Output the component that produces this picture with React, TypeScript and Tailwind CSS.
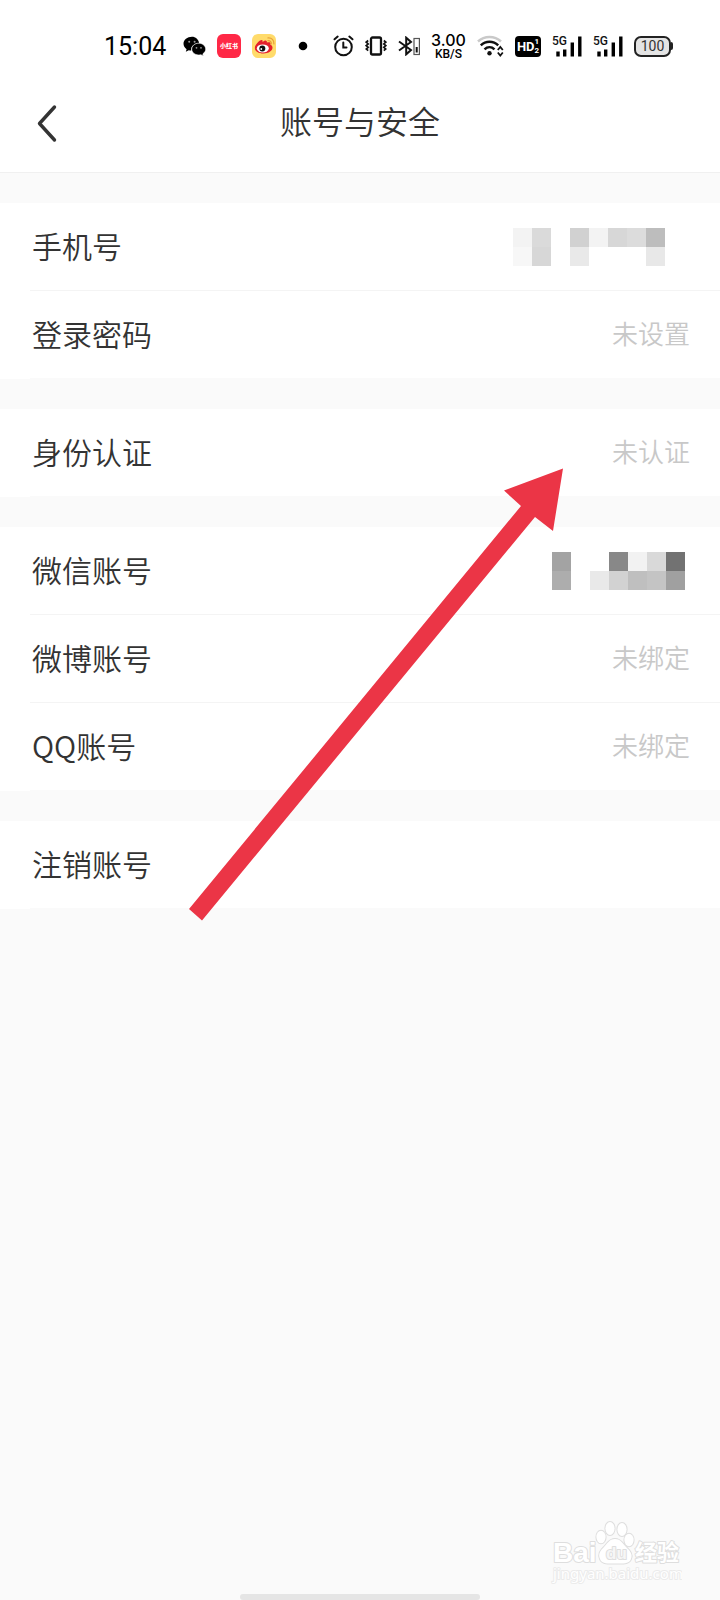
import type { ReactNode } from "react";

function StatusBar() {
  return (
    <div className="flex h-[92px] items-center gap-[11px] pl-[104px] text-black">
      <time className="w-[68px] text-[25px] leading-none font-[Roboto,sans-serif]">15:04</time>
      <svg className="h-[20px] w-[23px] shrink-0" viewBox="0 0 23 20" aria-label="WeChat">
        <path d="M9 0.8c-4.7 0-8.5 3.1-8.5 7 0 2.2 1.2 4.1 3.1 5.4l-.8 2.6 3-1.6c.8.2 1.5.4 2.4.4-.7-4.300 3.300-7.600 8-7.400C15.400 3.500 12.600.8 9 .8Z" fill="#000" />
        <path d="M15.700 7.200c-3.900 0-7 2.700-7 5.900s3.100 5.900 7 5.900c.8 0 1.500-.1 2.200-.3l2.500 1.300-.6-2.100c1.700-1.100 2.900-2.800 2.900-4.800 0-3.200-3.100-5.900-7-5.900Z" fill="#000" stroke="#fff" strokeWidth="0.600" />
        <circle cx="6.200" cy="5.800" r="1" fill="#999" />
        <circle cx="11.600" cy="5.800" r="1" fill="#999" />
        <circle cx="13.500" cy="11.800" r="0.900" fill="#999" />
        <circle cx="18" cy="11.800" r="0.900" fill="#999" />
      </svg>
      <span className="flex size-[24px] shrink-0 items-center justify-center rounded-md bg-[#ff2846] text-[6px] leading-none font-black whitespace-nowrap text-white">
        小红书
      </span>
      <svg className="size-[24px] shrink-0" viewBox="0 0 24 24" aria-label="Weibo">
        <rect width="24" height="24" rx="6" fill="#ffdb6b" />
        <path d="M10.500 8.200C12 6.500 14 6 14.700 7c.3.500.2 1 .1 1.600 2-.7 3.800-.5 3.800 1 0 .6-.2 1-.2 1.200 1.300.5 2.100 1.500 2.100 2.900 0 3-4 5.700-9 5.700-4.800 0-8.700-2.100-8.700-5.500C2.800 11 7.500 5.800 9.800 6c.9.100 1 1 .7 2.200Z" fill="#e4202c" />
        <ellipse cx="10.800" cy="14.400" rx="6" ry="4" fill="#fff" />
        <circle cx="10.300" cy="14.500" r="3" fill="#111" />
        <circle cx="9.300" cy="15" r="0.900" fill="#fff" />
        <path d="M16 6.700c2-.3 3.500 1.200 3.300 3.200M16 3.900c3.600-.4 6.200 2.300 5.900 6" fill="none" stroke="#e9a23b" strokeWidth="1.300" strokeLinecap="round" />
      </svg>
      <svg className="h-[10px] w-[35px] shrink-0" viewBox="0 0 35 10">
        <circle cx="16" cy="5" r="4.300" />
      </svg>
      <svg className="h-[22px] w-[21px] shrink-0" viewBox="0 0 21 22" fill="none" stroke="#111" strokeWidth="2" strokeLinecap="round" aria-label="Alarm">
        <circle cx="10.500" cy="12" r="8.300" />
        <path d="M10.300 7.500v5h3.200M1.500 4.300 4.700 1.600M19.500 4.300l-3.200-2.700" />
      </svg>
      <svg className="h-[20px] w-[22px] shrink-0" viewBox="0 0 22 20" fill="none" stroke="#111" strokeWidth="1.700" aria-label="Vibrate">
        <rect x="6" y="1.500" width="10" height="17" rx="1.500" strokeWidth="2.300" />
        <path d="M3.200 4.500l-2 1.700 2 1.700-2 1.700 2 1.700-2 1.700 2 1.700M18.800 4.500l2 1.700-2 1.700 2 1.700-2 1.700 2 1.700-2 1.700" />
      </svg>
      <svg className="h-[20px] w-[22px] shrink-0" viewBox="0 0 22 20" fill="none" stroke="#111" strokeWidth="2" aria-label="Bluetooth">
        <path d="M1 5.500 13 14 8.200 18.300V1.700L13 6 1 14.500" />
        <rect x="16" y="2.500" width="5.400" height="16" strokeWidth="1.200" stroke="#555" />
        <path d="M18.700 11v5.500" strokeWidth="2" />
      </svg>
      <span className="flex w-[35px] flex-col items-center font-medium">
        <span className="font-[Inter,sans-serif] text-[16px] leading-[16px]">3.00</span>
        <span className="font-[Roboto,sans-serif] text-[12px] leading-[12px]">KB/S</span>
      </span>
      <svg className="h-[22px] w-[27px] shrink-0" viewBox="0 0 27 22" fill="none" strokeWidth="2.500" aria-label="Wi-Fi">
        <path d="M1 6.500c6.500-6 16.500-6 23 0" stroke="#c9c9c9" />
        <path d="M3.800 10.300c5-4.800 12.400-4.800 17.400 0M7.500 14.300c3-2.800 7-2.800 10 0" stroke="#111" />
        <circle cx="12.500" cy="18.300" r="2.200" fill="#111" />
        <path d="m20.800 15 2.500-3 2.500 3M20.800 17.500l2.500 3 2.500-3" stroke="#111" strokeWidth="1.800" />
      </svg>
      <span className="flex h-[21px] w-[26px] shrink-0 items-center justify-center rounded-[4px] bg-black font-[Roboto,sans-serif] font-bold text-white">
        <span className="text-[13px] leading-none">HD</span>
        <span className="flex flex-col text-[8px] leading-[9px]">
          <span>1</span>
          <span>2</span>
        </span>
      </span>
      <Signal />
      <Signal />
      <span className="flex shrink-0 items-center">
        <span className="flex h-[21px] w-[37px] items-center justify-center rounded-[7px] border-2 border-[#222] bg-[#e4e4e4] font-[Roboto,sans-serif] text-[14px] leading-none text-[#333]">
          100
        </span>
        <span className="h-[8px] w-[2px] rounded-r-sm bg-[#222]" />
      </span>
    </div>
  );
}

function Signal() {
  return (
    <svg className="h-[22px] w-[30px] shrink-0" viewBox="0 0 30 22" aria-label="5G signal">
      <text x="0" y="10" fontSize="12" fontFamily="Roboto, sans-serif" fontWeight="500" fill="#111">5G</text>
      <path d="M6 21.500v-5M12.700 21.500v-7M20.300 21.500v-14M27.800 21.500v-20" stroke="#000" strokeWidth="3.400" />
    </svg>
  );
}

function Mosaic({ rows }: { rows: string[][] }) {
  return (
    <span className="flex flex-col" role="img" aria-label="••••">
      {rows.map((row, r) => (
        <span key={r} className="flex">
          {row.map((color, c) => (
            <span key={c} className="size-[19px]" style={{ backgroundColor: color }} />
          ))}
        </span>
      ))}
    </span>
  );
}

function Row({ label, children }: { label: string; children?: ReactNode }) {
  return (
    <li className="group h-[88px] bg-white pl-[30px]">
      <button type="button" className="flex h-full w-full items-center justify-between border-b border-[#f4f4f4] pr-[30px] pb-[3px] pl-[2px] text-left group-last:border-[#fafafa]">
        <span className="text-[30px] leading-[44px] font-[350] text-[#333]">{label}</span>
        <span className="text-[26px] leading-[40px] font-[350] text-[#c8c8c8]">{children}</span>
      </button>
    </li>
  );
}

const W = "transparent";
const phone = [
  ["#f3f3f3", "#dadada", W, "#d1d1d1", "#f3f3f3", "#d7d7d7", "#dcdcdc", "#bdbdbd"],
  ["#f7f7f7", "#d7d7d7", W, "#e9e9e9", W, W, W, "#e8e8e8"],
];
const wechat = [
  ["#a3a3a3", W, W, "#888888", "#f2f2f2", "#d9d9d9", "#727272"],
  ["#adadad", W, "#e9e9e9", "#d2d2d2", "#bfbfbf", "#c4c4c4", "#a0a0a0"],
];

export default function App() {
  return (
    <div className="relative flex min-h-screen flex-col bg-[#fafafa] font-['Noto_Sans_CJK_SC',sans-serif]">
      <div className="bg-white">
        <StatusBar />
        <header className="grid h-[81px] grid-cols-[96px_1fr_96px] border-b border-[#f0f0f0] pb-[20px]">
          <button type="button" aria-label="返回" className="flex items-center pt-[2px] pl-[36px]">
            <svg className="h-[40px] w-[22px]" viewBox="0 0 22 40" fill="none" stroke="#333" strokeWidth="3.400" strokeLinecap="round" strokeLinejoin="round">
              <path d="M18.500 4 3.500 20.500l15 16.500" />
            </svg>
          </button>
          <h1 className="pt-[6px] text-center text-[32px] leading-[44px] font-[350] text-[#333]">账号与安全</h1>
        </header>
      </div>

      <main className="flex flex-col gap-[30px] pt-[30px]">
        <ul>
          <Row label="手机号">
            <span className="block pt-[3px] pr-[25px]">
              <Mosaic rows={phone} />
            </span>
          </Row>
          <Row label="登录密码">未设置</Row>
        </ul>
        <ul>
          <Row label="身份认证">未认证</Row>
        </ul>
        <ul>
          <Row label="微信账号">
            <span className="block pt-[3px] pr-[5px]">
              <Mosaic rows={wechat} />
            </span>
          </Row>
          <Row label="微博账号">未绑定</Row>
          <Row label="QQ账号">未绑定</Row>
        </ul>
        <ul>
          <Row label="注销账号" />
        </ul>
      </main>

      <svg className="pointer-events-none absolute top-[468px] left-[188px] h-[454px] w-[376px]" viewBox="188 468 376 454" aria-hidden="true">
        <path d="M563 468.500 504 490.500 521 506 189 909l13 11.500L535 517l18 14Z" fill="#eb3546" />
      </svg>

      <footer className="mt-auto flex flex-col items-center">
        <div className="mr-[38px] mb-[10px] self-end">
          <svg className="h-[67px] w-[132px]" viewBox="0 0 132 67" fill="#fff" stroke="#dedede" strokeWidth="2" strokeLinejoin="round" style={{ paintOrder: "stroke" }} aria-label="Baidu 经验">
            <text x="3" y="45" fontSize="28" fontWeight="700" fontFamily="Liberation Sans, sans-serif">Bai</text>
            <ellipse cx="51" cy="20" rx="4.600" ry="6.300" />
            <ellipse cx="60" cy="11.500" rx="4.600" ry="6.500" />
            <ellipse cx="72" cy="12.500" rx="4.600" ry="6.500" />
            <ellipse cx="79" cy="23" rx="4.600" ry="6.200" />
            <path d="M65 22c-6 0-8 5-11 8-4 4-6 7-4 12 2 5 7 4.500 15.500 4.500S79 47 81 42c2-5-1-8-5-12-3-3-5-8-11-8Z" />
            <text x="56" y="42" fontSize="17" fontWeight="700" fontFamily="Liberation Sans, sans-serif" fill="#f6f6f6">du</text>
            <text x="85" y="43" fontSize="22" fontWeight="700" fontFamily="Noto Sans CJK SC, sans-serif">经验</text>
            <text x="3" y="62" fontSize="15" fontFamily="Noto Sans, sans-serif" stroke="#ebebeb">jingyan.baidu.com</text>
          </svg>
        </div>
        <div className="h-[6px] w-1/3 rounded-full bg-[#e5e5e5]" />
      </footer>
    </div>
  );
}
